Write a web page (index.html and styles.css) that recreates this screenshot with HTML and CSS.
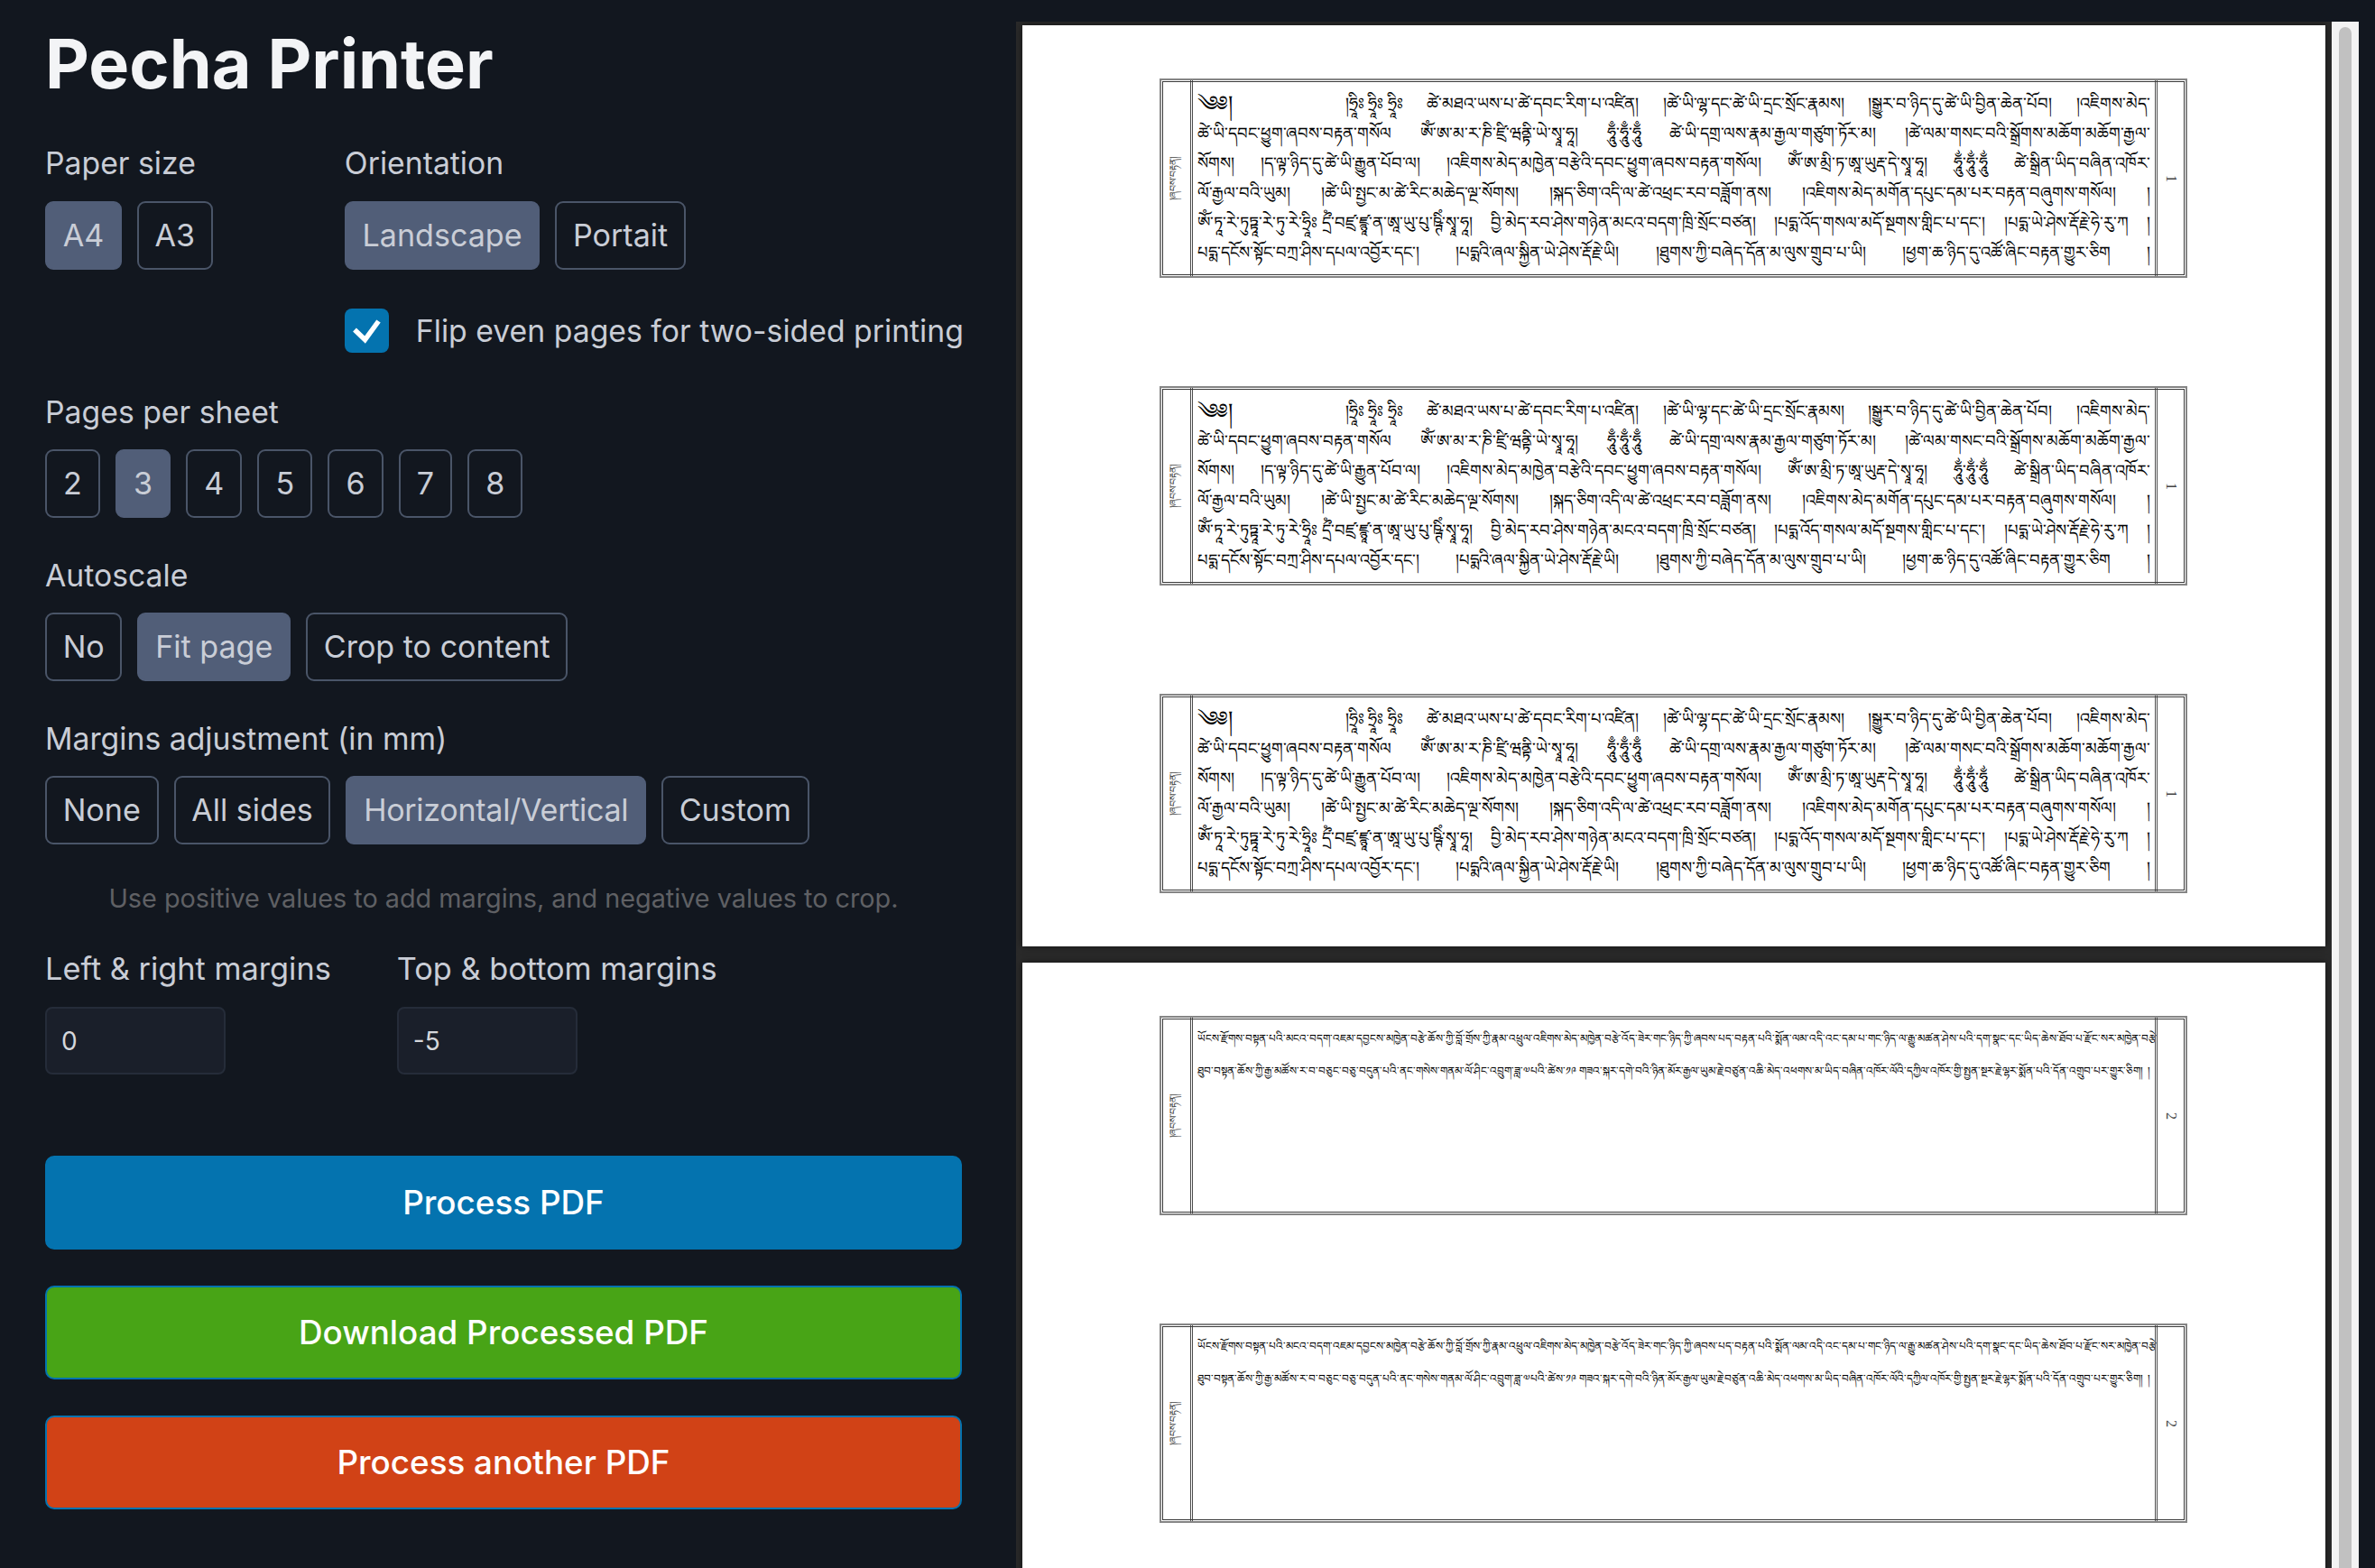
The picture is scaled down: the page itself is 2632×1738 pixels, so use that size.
FILE: index.html
```html
<!doctype html>
<html lang="en">
<head>
<meta charset="utf-8">
<title>Pecha Printer</title>
<link rel="stylesheet" href="styles.css">
</head>
<body>
<main class="app">
  <aside class="panel">
    <h1 class="title">Pecha Printer</h1>
    <div class="top-row">
      <section class="group">
        <div class="label">Paper size</div>
        <div class="btns"><button class="opt on">A4</button><button class="opt">A3</button></div>
      </section>
      <section class="group">
        <div class="label">Orientation</div>
        <div class="btns"><button class="opt on">Landscape</button><button class="opt">Portait</button></div>
        <label class="flip"><span class="check"><svg viewBox="0 0 49 49" width="49" height="49"><path d="M11 23.5 L22.5 34.5 L37.5 14" fill="none" stroke="#fff" stroke-width="5.5"/></svg></span>Flip even pages for two-sided printing</label>
      </section>
    </div>
    <section class="group sec-a">
      <div class="label">Pages per sheet</div>
      <div class="btns"><button class="opt num">2</button><button class="opt num on">3</button><button class="opt num">4</button><button class="opt num">5</button><button class="opt num">6</button><button class="opt num">7</button><button class="opt num">8</button></div>
    </section>
    <section class="group sec-b">
      <div class="label">Autoscale</div>
      <div class="btns"><button class="opt">No</button><button class="opt on">Fit page</button><button class="opt">Crop to content</button></div>
    </section>
    <section class="group sec-b">
      <div class="label">Margins adjustment (in mm)</div>
      <div class="btns"><button class="opt">None</button><button class="opt">All sides</button><button class="opt on tight">Horizontal/Vertical</button><button class="opt">Custom</button></div>
    </section>
    <p class="hint">Use positive values to add margins, and negative values to crop.</p>
    <div class="inputs">
      <section class="group"><div class="label">Left &amp; right margins</div><input class="field" value="0"></section>
      <section class="group"><div class="label">Top &amp; bottom margins</div><input class="field" value="-5"></section>
    </div>
    <button class="act blue">Process PDF</button>
    <button class="act green">Download Processed PDF</button>
    <button class="act red">Process another PDF</button>
  </aside>
  <div class="viewer">
    <div class="page">
      <div class="frame">
        <div class="side"><span class="side-t">།ཞབས་བརྟན།</span></div>
        <div class="body big">
          <div class="ln l1"><span class="gap1">༄༅།</span><span>།ཧྲཱིཿ ཧྲཱིཿ ཧྲཱིཿ</span><span>ཚེ་མཐའ་ཡས་པ་ཚེ་དབང་རིག་པ་འཛིན།</span><span>།ཚེ་ཡི་ལྷ་དང་ཚེ་ཡི་དྲང་སྲོང་རྣམས།</span><span>།སྒྱུར་བ་ཉིད་དུ་ཚེ་ཡི་བྱིན་ཆེན་པོབ།</span><span>།འཇིགས་མེད་</span></div>
          <div class="ln"><span>ཚེ་ཡི་དབང་ཕྱུག་ཞབས་བརྟན་གསོལ</span><span>ༀ་ཨ་མ་ར་ཎི་ཛྲི་ཝནྟི་ཡེ་སྭཱ་ཧཱ།</span><span>ཧཱུྃ་ཧཱུྃ་ཧཱུྃ</span><span>ཚེ་ཡི་དགྲ་ལས་རྣམ་རྒྱལ་གཙུག་ཏོར་མ།</span><span>།ཚེ་ལམ་གསང་བའི་སྒྲོགས་མཆོག་མཆོག་རྒྱལ་</span></div>
          <div class="ln"><span>སོགས།</span><span>།ད་ལྟ་ཉིད་དུ་ཚེ་ཡི་རྒྱུན་པོབ་ལ།</span><span>།འཇིགས་མེད་མཁྱེན་བརྩེའི་དབང་ཕྱུག་ཞབས་བརྟན་གསོལ།</span><span>ༀ་ཨ་མྲི་ཏ་ཨཱ་ཡུརྡ་དེ་སྭཱ་ཧཱ།</span><span>ཧཱུྂ་ཧཱུྂ་ཧཱུྂ</span><span>ཚེ་སྒྲིན་ཡིད་བཞིན་འཁོར་</span></div>
          <div class="ln"><span>ལོ་རྒྱལ་བའི་ཡུམ།</span><span>།ཚེ་ཡི་སྤྱང་མ་ཚེ་རིང་མཆེད་ལྔ་སོགས།</span><span>།སྐད་ཅིག་འདི་ལ་ཚེ་འཕྲང་རབ་བཟློག་ནས།</span><span>།འཇིགས་མེད་མགོན་དཔུང་དམ་པར་བརྟན་བཞུགས་གསོལ།</span><span>།</span></div>
          <div class="ln"><span>ༀ་ཏཱ་རེ་ཏུཏྟཱ་རེ་ཏུ་རེ་ཧྲཱིཿ དྲྀཾ་བཛྲ་ཛྙཱ་ན་ཨཱ་ཡུ་པུ་ཥྚིཾ་སྭཱ་ཧཱ།</span><span>བྱི་མེད་རབ་ཤེས་གཉེན་མངའ་བདག་ཁྲི་སྲོང་བཙན།</span><span>།པདྨ་འོད་གསལ་མདོ་སྔགས་གླིང་པ་དང་།</span><span>།པདྨ་ཡེ་ཤེས་རྡོ་རྗེ་ཧེ་རུ་ཀ</span><span>།</span></div>
          <div class="ln"><span>པདྨ་དངོས་སྟོང་བཀྲ་ཤིས་དཔལ་འབྱོར་དང་།</span><span>།པདྨའི་ཞལ་སྐྱིན་ཡེ་ཤེས་རྡོ་རྗེ་ཡི།</span><span>།ཐུགས་ཀྱི་བཞེད་དོན་མ་ལུས་གྲུབ་པ་ཡི།</span><span>།ཕྱག་ཆ་ཉིད་དུ་འཚོ་ཞིང་བརྟན་གྱུར་ཅིག</span><span>།</span></div>
        </div>
        <div class="side right"><span class="no">1</span></div>
      </div>
      <div class="frame">
        <div class="side"><span class="side-t">།ཞབས་བརྟན།</span></div>
        <div class="body big">
          <div class="ln l1"><span class="gap1">༄༅།</span><span>།ཧྲཱིཿ ཧྲཱིཿ ཧྲཱིཿ</span><span>ཚེ་མཐའ་ཡས་པ་ཚེ་དབང་རིག་པ་འཛིན།</span><span>།ཚེ་ཡི་ལྷ་དང་ཚེ་ཡི་དྲང་སྲོང་རྣམས།</span><span>།སྒྱུར་བ་ཉིད་དུ་ཚེ་ཡི་བྱིན་ཆེན་པོབ།</span><span>།འཇིགས་མེད་</span></div>
          <div class="ln"><span>ཚེ་ཡི་དབང་ཕྱུག་ཞབས་བརྟན་གསོལ</span><span>ༀ་ཨ་མ་ར་ཎི་ཛྲི་ཝནྟི་ཡེ་སྭཱ་ཧཱ།</span><span>ཧཱུྃ་ཧཱུྃ་ཧཱུྃ</span><span>ཚེ་ཡི་དགྲ་ལས་རྣམ་རྒྱལ་གཙུག་ཏོར་མ།</span><span>།ཚེ་ལམ་གསང་བའི་སྒྲོགས་མཆོག་མཆོག་རྒྱལ་</span></div>
          <div class="ln"><span>སོགས།</span><span>།ད་ལྟ་ཉིད་དུ་ཚེ་ཡི་རྒྱུན་པོབ་ལ།</span><span>།འཇིགས་མེད་མཁྱེན་བརྩེའི་དབང་ཕྱུག་ཞབས་བརྟན་གསོལ།</span><span>ༀ་ཨ་མྲི་ཏ་ཨཱ་ཡུརྡ་དེ་སྭཱ་ཧཱ།</span><span>ཧཱུྂ་ཧཱུྂ་ཧཱུྂ</span><span>ཚེ་སྒྲིན་ཡིད་བཞིན་འཁོར་</span></div>
          <div class="ln"><span>ལོ་རྒྱལ་བའི་ཡུམ།</span><span>།ཚེ་ཡི་སྤྱང་མ་ཚེ་རིང་མཆེད་ལྔ་སོགས།</span><span>།སྐད་ཅིག་འདི་ལ་ཚེ་འཕྲང་རབ་བཟློག་ནས།</span><span>།འཇིགས་མེད་མགོན་དཔུང་དམ་པར་བརྟན་བཞུགས་གསོལ།</span><span>།</span></div>
          <div class="ln"><span>ༀ་ཏཱ་རེ་ཏུཏྟཱ་རེ་ཏུ་རེ་ཧྲཱིཿ དྲྀཾ་བཛྲ་ཛྙཱ་ན་ཨཱ་ཡུ་པུ་ཥྚིཾ་སྭཱ་ཧཱ།</span><span>བྱི་མེད་རབ་ཤེས་གཉེན་མངའ་བདག་ཁྲི་སྲོང་བཙན།</span><span>།པདྨ་འོད་གསལ་མདོ་སྔགས་གླིང་པ་དང་།</span><span>།པདྨ་ཡེ་ཤེས་རྡོ་རྗེ་ཧེ་རུ་ཀ</span><span>།</span></div>
          <div class="ln"><span>པདྨ་དངོས་སྟོང་བཀྲ་ཤིས་དཔལ་འབྱོར་དང་།</span><span>།པདྨའི་ཞལ་སྐྱིན་ཡེ་ཤེས་རྡོ་རྗེ་ཡི།</span><span>།ཐུགས་ཀྱི་བཞེད་དོན་མ་ལུས་གྲུབ་པ་ཡི།</span><span>།ཕྱག་ཆ་ཉིད་དུ་འཚོ་ཞིང་བརྟན་གྱུར་ཅིག</span><span>།</span></div>
        </div>
        <div class="side right"><span class="no">1</span></div>
      </div>
      <div class="frame">
        <div class="side"><span class="side-t">།ཞབས་བརྟན།</span></div>
        <div class="body big">
          <div class="ln l1"><span class="gap1">༄༅།</span><span>།ཧྲཱིཿ ཧྲཱིཿ ཧྲཱིཿ</span><span>ཚེ་མཐའ་ཡས་པ་ཚེ་དབང་རིག་པ་འཛིན།</span><span>།ཚེ་ཡི་ལྷ་དང་ཚེ་ཡི་དྲང་སྲོང་རྣམས།</span><span>།སྒྱུར་བ་ཉིད་དུ་ཚེ་ཡི་བྱིན་ཆེན་པོབ།</span><span>།འཇིགས་མེད་</span></div>
          <div class="ln"><span>ཚེ་ཡི་དབང་ཕྱུག་ཞབས་བརྟན་གསོལ</span><span>ༀ་ཨ་མ་ར་ཎི་ཛྲི་ཝནྟི་ཡེ་སྭཱ་ཧཱ།</span><span>ཧཱུྃ་ཧཱུྃ་ཧཱུྃ</span><span>ཚེ་ཡི་དགྲ་ལས་རྣམ་རྒྱལ་གཙུག་ཏོར་མ།</span><span>།ཚེ་ལམ་གསང་བའི་སྒྲོགས་མཆོག་མཆོག་རྒྱལ་</span></div>
          <div class="ln"><span>སོགས།</span><span>།ད་ལྟ་ཉིད་དུ་ཚེ་ཡི་རྒྱུན་པོབ་ལ།</span><span>།འཇིགས་མེད་མཁྱེན་བརྩེའི་དབང་ཕྱུག་ཞབས་བརྟན་གསོལ།</span><span>ༀ་ཨ་མྲི་ཏ་ཨཱ་ཡུརྡ་དེ་སྭཱ་ཧཱ།</span><span>ཧཱུྂ་ཧཱུྂ་ཧཱུྂ</span><span>ཚེ་སྒྲིན་ཡིད་བཞིན་འཁོར་</span></div>
          <div class="ln"><span>ལོ་རྒྱལ་བའི་ཡུམ།</span><span>།ཚེ་ཡི་སྤྱང་མ་ཚེ་རིང་མཆེད་ལྔ་སོགས།</span><span>།སྐད་ཅིག་འདི་ལ་ཚེ་འཕྲང་རབ་བཟློག་ནས།</span><span>།འཇིགས་མེད་མགོན་དཔུང་དམ་པར་བརྟན་བཞུགས་གསོལ།</span><span>།</span></div>
          <div class="ln"><span>ༀ་ཏཱ་རེ་ཏུཏྟཱ་རེ་ཏུ་རེ་ཧྲཱིཿ དྲྀཾ་བཛྲ་ཛྙཱ་ན་ཨཱ་ཡུ་པུ་ཥྚིཾ་སྭཱ་ཧཱ།</span><span>བྱི་མེད་རབ་ཤེས་གཉེན་མངའ་བདག་ཁྲི་སྲོང་བཙན།</span><span>།པདྨ་འོད་གསལ་མདོ་སྔགས་གླིང་པ་དང་།</span><span>།པདྨ་ཡེ་ཤེས་རྡོ་རྗེ་ཧེ་རུ་ཀ</span><span>།</span></div>
          <div class="ln"><span>པདྨ་དངོས་སྟོང་བཀྲ་ཤིས་དཔལ་འབྱོར་དང་།</span><span>།པདྨའི་ཞལ་སྐྱིན་ཡེ་ཤེས་རྡོ་རྗེ་ཡི།</span><span>།ཐུགས་ཀྱི་བཞེད་དོན་མ་ལུས་གྲུབ་པ་ཡི།</span><span>།ཕྱག་ཆ་ཉིད་དུ་འཚོ་ཞིང་བརྟན་གྱུར་ཅིག</span><span>།</span></div>
        </div>
        <div class="side right"><span class="no">1</span></div>
      </div>
    </div>
    <div class="page">
      <div class="frame">
        <div class="side"><span class="side-t">།ཞབས་བརྟན།</span></div>
        <div class="body small">
          <div class="ln"><span>ཡོངས་རྫོགས་བསྟན་པའི་མངའ་བདག་འཇམ་དབྱངས་མཁྱེན་བརྩེ་ཆོས་ཀྱི་བློ་གྲོས་ཀྱི་རྣམ་འཕྲུལ་འཇིགས་མེད་མཁྱེན་བརྩེ་འོད་ཟེར་གང་ཉིད་ཀྱི་ཞབས་པད་བརྟན་པའི་སྨོན་ལམ་འདི་འང་དམ་པ་གང་ཉིད་ལ་རྒྱུ་མཚན་ཤེས་པའི་དག་སྣང་དང་ཡིད་ཆེས་ཐོབ་པ་རྫོང་སར་མཁྱེན་བརྩེ</span></div>
          <div class="ln"><span>ཐུབ་བསྟན་ཆོས་ཀྱི་རྒྱ་མཚོས་ར་བ་བཅུང་བཅུ་བདུན་པའི་ནང་གསེས་གནམ་ལོ་ཤིང་འབྲུག་ཟླ་༧པའི་ཚེས་༡༩ གཟའ་སྐར་དགེ་བའི་ཉིན་མོར་རྒྱལ་ཡུམ་རྗེ་བཙུན་འཆི་མེད་འཕགས་མ་ཡིད་བཞིན་འཁོར་ལོའི་དཀྱིལ་འཁོར་གྱི་སྤྱན་སྔར་རྗེ་ལྷར་སྨོན་པའི་དོན་འགྲུབ་པར་གྱུར་ཅིག།</span><span>།</span></div>
        </div>
        <div class="side right"><span class="no">2</span></div>
      </div>
      <div class="frame">
        <div class="side"><span class="side-t">།ཞབས་བརྟན།</span></div>
        <div class="body small">
          <div class="ln"><span>ཡོངས་རྫོགས་བསྟན་པའི་མངའ་བདག་འཇམ་དབྱངས་མཁྱེན་བརྩེ་ཆོས་ཀྱི་བློ་གྲོས་ཀྱི་རྣམ་འཕྲུལ་འཇིགས་མེད་མཁྱེན་བརྩེ་འོད་ཟེར་གང་ཉིད་ཀྱི་ཞབས་པད་བརྟན་པའི་སྨོན་ལམ་འདི་འང་དམ་པ་གང་ཉིད་ལ་རྒྱུ་མཚན་ཤེས་པའི་དག་སྣང་དང་ཡིད་ཆེས་ཐོབ་པ་རྫོང་སར་མཁྱེན་བརྩེ</span></div>
          <div class="ln"><span>ཐུབ་བསྟན་ཆོས་ཀྱི་རྒྱ་མཚོས་ར་བ་བཅུང་བཅུ་བདུན་པའི་ནང་གསེས་གནམ་ལོ་ཤིང་འབྲུག་ཟླ་༧པའི་ཚེས་༡༩ གཟའ་སྐར་དགེ་བའི་ཉིན་མོར་རྒྱལ་ཡུམ་རྗེ་བཙུན་འཆི་མེད་འཕགས་མ་ཡིད་བཞིན་འཁོར་ལོའི་དཀྱིལ་འཁོར་གྱི་སྤྱན་སྔར་རྗེ་ལྷར་སྨོན་པའི་དོན་འགྲུབ་པར་གྱུར་ཅིག།</span><span>།</span></div>
        </div>
        <div class="side right"><span class="no">2</span></div>
      </div>
    </div>
  </div>
  <div class="scrollbar"><div class="thumb"></div></div>
</main>
</body>
</html>
```
FILE: styles.css
```css
*{box-sizing:border-box}
html,body{margin:0;height:1738px;overflow:hidden;background:#12171f}
body{font-family:Inter,"Liberation Sans",sans-serif;color:#c9cdd6}
.app{display:flex;height:1738px}
.panel{flex:none;width:1126px;padding:31px 60px 0 50px}
.title{margin:0;font-size:75.5px;line-height:80px;font-weight:700;color:#f3f4f6}
.top-row{display:flex;column-gap:146px;margin-top:50px}
.label{height:40px;line-height:40px;font-size:33.75px;color:#c9cdd6;white-space:nowrap}
.btns{display:flex;gap:17px;margin-top:21px}
.top-row .btns{margin-top:22px}
.opt{height:75.5px;padding:0 17.7px;border:2px solid #4a5568;border-radius:9px;background:transparent;color:#c9cdd6;font-family:inherit;font-size:34.1px;white-space:nowrap}
.opt.on{background:#515e78;border-color:#515e78}
.opt.num{padding:0 18.1px}
.opt.tight{letter-spacing:-.3px}
.flip{display:flex;align-items:center;gap:30px;margin-top:43px;font-size:33.75px;white-space:nowrap;color:#c9cdd6}
.check{flex:none;width:49px;height:49px;border-radius:8px;background:#0473af;display:block}
.check svg{display:block}
.sec-a{margin-top:46.5px}
.sec-b{margin-top:44.5px}
.hint{margin:40px 0 0;height:40px;line-height:40px;text-align:center;font-size:28.8px;color:#5f6064}
.inputs{display:flex;column-gap:73px;margin-top:38.5px}
.inputs .label{font-size:34.3px}
.field{display:block;margin-top:22px;width:200px;height:75px;padding:0 16px;border:2px solid #252c39;border-radius:8px;background:#1a1f2a;color:#d5d7db;font-family:inherit;font-size:28px;outline:none}
.act{display:block;width:100%;height:104px;border-radius:10px;border:2px solid #0473af;color:#fff;font-family:inherit;font-size:36.8px;font-weight:500;margin-top:40px}
.blue{background:#0473af;margin-top:89.5px}
.green{background:#48a416}
.red{background:#d14216}
.viewer{flex:none;width:1458px;height:1714px;margin-top:24px;padding:4px 7px 0;background:#2a2a2a;overflow:hidden;display:flex;flex-direction:column;gap:18px}
.page{flex:none;width:1444px;height:1021px;background:#fff;box-shadow:0 0 8px rgba(0,0,0,.55);padding:59px 153px 0 152px;display:flex;flex-direction:column;gap:120px}
.frame{flex:none;height:221px;display:flex;border:2.5px solid #858585;outline:1.5px solid #3a3a3a;outline-offset:-4px;background:#fff;font-family:"Liberation Serif",serif;color:#000}
.side{flex:none;width:35px;border-right:3px double #4d4d4d;display:flex;align-items:center;justify-content:center}
.side.right{width:33px;border-right:0;border-left:3px double #4d4d4d;margin-right:1px}
.side-t{display:block;flex:none;font-size:11px;white-space:nowrap;transform:rotate(-90deg);color:#444}
.no{display:block;font-size:16px;color:#444;transform:rotate(90deg)}
.body{flex:1;min-width:0;padding:9.5px 5px 0}
.ln{display:flex;justify-content:space-between;white-space:nowrap}
.big{font-size:18px}
.big .ln{height:33px;line-height:33px}
.small{font-size:11.94px;padding-top:4.5px}
.small .ln{height:36px;line-height:36px}
.gap1{font-size:24px;margin-right:98px}
.scrollbar{flex:none;width:30px;height:1714px;margin-top:24px;padding:6px 8px 0;background:#f3f3f3}
.thumb{height:100%;background:#c1c1c1;border-radius:8px 8px 0 0}
```
